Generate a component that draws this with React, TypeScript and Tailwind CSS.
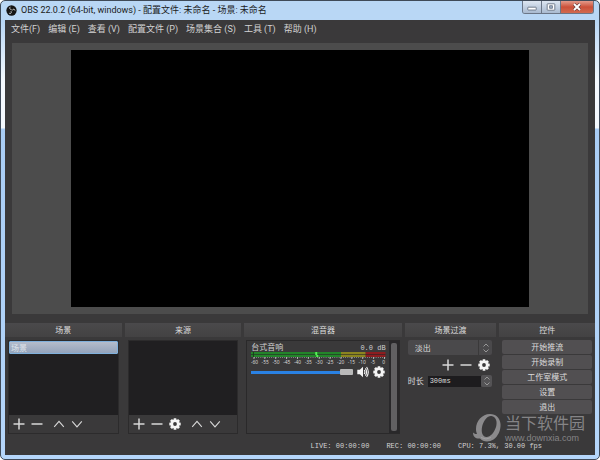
import type { ReactNode } from "react";

const menus = ["文件(F)", "编辑 (E)", "查看 (V)", "配置文件 (P)", "场景集合 (S)", "工具 (T)", "帮助 (H)"];
const actions = ["开始推流", "开始录制", "工作室模式", "设置", "退出"];
const levels = [-60, -55, -50, -45, -40, -35, -30, -25, -20, -15, -10, -5, 0];

type IconName = "plus" | "minus" | "up" | "down" | "gear";

const strokes = {
  plus: "M6 0.5V11.5M0.5 6H11.5",
  minus: "M0.5 6H11.5",
  up: "M1.2 8.8L6 3.4L10.8 8.8",
  down: "M1.2 3.4L6 8.8L10.8 3.4",
};

function Icon({ name }: { name: IconName }) {
  if (name === "gear") {
    return (
      <svg viewBox="0 0 12 12" className="size-3" aria-hidden>
        <g fill="#f4f4f4">
          {[0, 45, 90, 135].map((angle) => (
            <rect key={angle} x="4.6" y="0.3" width="2.8" height="11.4" rx="0.5" transform={`rotate(${angle} 6 6)`} />
          ))}
          <circle cx="6" cy="6" r="4.4" />
        </g>
        <circle cx="6" cy="6" r="1.9" fill="#3a393a" />
      </svg>
    );
  }
  return (
    <svg viewBox="0 0 12 12" className="size-3" fill="none" stroke="#d8d8d8" strokeWidth={name === "plus" || name === "minus" ? 1.5 : 1.1} aria-hidden>
      <path d={strokes[name]} />
    </svg>
  );
}

function IconButton({ name, label }: { name: IconName; label: string }) {
  return (
    <button type="button" aria-label={label} className="flex size-3 items-center justify-center">
      <Icon name={name} />
    </button>
  );
}

function Dock({ title, className, children }: { title: string; className: string; children: ReactNode }) {
  return (
    <section className={`flex min-w-0 flex-col ${className}`}>
      <h2 className="flex h-[14px] items-center justify-center bg-linear-to-b from-[#4a494b] to-[#434243] text-[8px] text-[#dcdcdc]">{title}</h2>
      {children}
    </section>
  );
}

function ListPanel({ items, tools, label }: { items: string[]; tools: ReactNode; label: string }) {
  return (
    <div className="mx-[3px] mt-[3px] flex flex-col border border-[#2c2b2c]">
      <ul className="h-[74px] bg-[#201f21]">
        {items.map((item) => (
          <li key={item} className="flex h-[13px] items-center rounded-[1px] border border-[#7fb0dc] bg-linear-to-b from-[#b4bccb] to-[#93a3bb] px-px text-[8px] text-[#dfe3e9]">
            {item}
          </li>
        ))}
      </ul>
      <div className="flex h-[18px] items-center gap-[6px] px-1">
        {tools}
        <div className="ml-1 flex gap-[6px]">
          <IconButton name="up" label={`上移${label}`} />
          <IconButton name="down" label={`下移${label}`} />
        </div>
      </div>
    </div>
  );
}

function WindowControls() {
  return (
    <div className="mr-px flex h-[13px] self-start overflow-hidden rounded-b-[3px] border border-t-0 border-[#6b7687]">
      <button type="button" aria-label="最小化" className="flex w-[19px] items-center justify-center border-r border-[#6b7687] bg-linear-to-b from-[#dde6f1] to-[#a9bad0]">
        <svg viewBox="0 0 10 8" className="h-2 w-[10px]" aria-hidden>
          <rect x="0.8" y="4.2" width="8.4" height="2.8" rx="0.5" fill="#fff" stroke="#596477" strokeWidth="0.8" />
        </svg>
      </button>
      <button type="button" aria-label="最大化" className="flex w-[19px] items-center justify-center border-r border-[#6b7687] bg-linear-to-b from-[#dde6f1] to-[#a9bad0]">
        <svg viewBox="0 0 10 8" className="h-2 w-[10px]" aria-hidden>
          <rect x="1.2" y="0.8" width="7.6" height="6.4" rx="0.5" fill="#fff" stroke="#596477" strokeWidth="0.8" />
          <rect x="3.7" y="2.8" width="2.6" height="2.4" fill="#a9bad0" stroke="#596477" strokeWidth="0.8" />
        </svg>
      </button>
      <button type="button" aria-label="关闭" className="flex w-[32px] items-center justify-center bg-linear-to-b from-[#e39a8b] via-[#cb5039] to-[#d16a50]">
        <svg viewBox="0 0 10 8" className="h-2 w-[10px]" aria-hidden>
          <path d="M2 1L8 7M8 1L2 7" stroke="#6a3c3c" strokeWidth="3.2" />
          <path d="M2 1L8 7M8 1L2 7" stroke="#fff" strokeWidth="1.9" />
        </svg>
      </button>
    </div>
  );
}

function VolumeMeter() {
  return (
    <svg viewBox="0 0 136 14" preserveAspectRatio="none" className="h-[14px] w-full" aria-hidden>
      <rect x="0" y="0" width="91" height="5" fill="#23852a" />
      <rect x="91" y="0" width="25" height="5" fill="#8b8420" />
      <rect x="116" y="0" width="20" height="5" fill="#8c1d20" />
      <path d="M0 2.5H136" stroke="#252525" strokeWidth="0.6" />
      <path d="M2.5 0V5" stroke="#1b3f1d" />
      <rect x="65" y="0" width="2" height="3" fill="#55f255" />
      <rect x="66" y="3" width="2" height="2" fill="#55f255" />
      <path d="M3 5.5H136" stroke="#a5a5a5" strokeWidth="1" strokeDasharray="0.7 1.5" />
      {levels.map((level, index) => (
        <g key={level}>
          <path d={`M${3 + index * 11} 5V7`} stroke="#cfcfcf" strokeWidth="0.8" />
          <text x={3.5 + index * 10.9} y="12" textAnchor="middle" fontSize="5" fill="#d8d8d8">
            {level}
          </text>
        </g>
      ))}
    </svg>
  );
}

function Mixer() {
  return (
    <div className="mx-[2px] mt-[3px] flex h-[94px] border border-[#2a292a]">
      <div className="flex min-w-0 flex-1 flex-col pl-1 pr-[3px] pt-[3px]">
        <div className="flex h-2 items-center justify-between font-['Liberation_Mono','Noto_Sans_CJK_SC',monospace] text-[8px] text-[#d0d0d0]">
          <span>台式音响</span>
          <span className="text-[7px]">0.0 dB</span>
        </div>
        <VolumeMeter />
        <div className="flex h-3 items-center gap-1">
          <input
            type="range"
            aria-label="台式音响音量"
            defaultValue={100}
            className="h-[7px] w-[102px] appearance-none bg-[linear-gradient(#2a82e4,#2a82e4)] bg-size-[100%_3px] bg-center bg-no-repeat [&::-webkit-slider-thumb]:h-[6px] [&::-webkit-slider-thumb]:w-[13px] [&::-webkit-slider-thumb]:appearance-none [&::-webkit-slider-thumb]:rounded-[1px] [&::-webkit-slider-thumb]:bg-[#b9b9b9]"
          />
          <button type="button" aria-label="静音" className="size-3">
            <svg viewBox="0 0 12 12" className="size-3" fill="none" stroke="#f4f4f4" aria-hidden>
              <path d="M0.3 3.8H2.8L6 0.8V11.2L2.8 8.2H0.3Z" fill="#f4f4f4" stroke="none" />
              <path d="M7.2 4Q8.6 6 7.2 8M8.4 2.4Q10.8 6 8.4 9.6M9.6 1Q13 6 9.6 11" strokeWidth="1.1" />
            </svg>
          </button>
          <IconButton name="gear" label="音频设置" />
        </div>
      </div>
      <div className="flex w-[10px] justify-center bg-[#29282a] py-[2px]">
        <div className="w-[6px] rounded-[2px] bg-[#616062]" />
      </div>
    </div>
  );
}

function Spinner() {
  return (
    <svg viewBox="0 0 10 12" className="h-3 w-[10px]" fill="none" stroke="#a0a0a0" strokeWidth="0.9" aria-hidden>
      <path d="M2.5 4.5L5 2L7.5 4.5M2.5 7.5L5 10L7.5 7.5" />
    </svg>
  );
}

function Transitions() {
  return (
    <div className="flex flex-col pl-[3px] pr-1 pt-[3px]">
      <div className="relative flex h-[15px] rounded-[2px] bg-[#4a494b]">
        <select aria-label="场景过渡" className="w-full appearance-none px-[7px] text-[8px] text-[#dcdcdc]">
          <option>淡出</option>
        </select>
        <span className="pointer-events-none absolute inset-y-0 right-0 flex w-[14px] items-center justify-center border-l border-[#3a393a]">
          <Spinner />
        </span>
      </div>
      <div className="flex h-5 items-center justify-end gap-[6px] pr-[2px]">
        <IconButton name="plus" label="添加过渡" />
        <IconButton name="minus" label="删除过渡" />
        <IconButton name="gear" label="过渡设置" />
      </div>
      <div className="flex h-3 items-center">
        <label htmlFor="duration" className="w-5 shrink-0 text-[8px] text-[#dcdcdc]">时长</label>
        <input id="duration" defaultValue="300ms" className="h-[11px] min-w-0 flex-1 bg-[#1d1c1e] px-[2px] font-['Liberation_Mono',monospace] text-[7px] text-[#dcdcdc]" />
        <button type="button" aria-label="调整时长" className="flex h-3 w-[11px] items-center justify-center rounded-[2px] bg-[#545355]">
          <Spinner />
        </button>
      </div>
    </div>
  );
}

function Watermark() {
  return (
    <div className="pointer-events-none absolute bottom-3 right-[10px] flex items-center gap-[3px] text-[#858486]">
      <svg viewBox="0 0 30 30" className="size-[30px]" aria-hidden>
        <path
          fillRule="evenodd"
          fill="#8b8a8c"
          d="M18 1C10 1 4 8 4 16C4 18 4.4 19.5 5 21C3.5 21.4 2 20.5 1 19.5C1 24 4 26 8 25.5C11 29 17 29.5 21.5 26.5C26 23.5 29 17 28.5 11C28 5 24 1 18 1ZM19.5 3C24 4 25.5 8.5 24 14C22 20 18 24.5 14 24C9.5 23 9 17.5 10.5 12C12.4 7 15.5 2.5 19.5 3Z"
        />
        <path d="M9 24.5Q14 27.5 19 24.5" fill="none" stroke="#a2a1a3" strokeWidth="1" />
      </svg>
      <div className="flex flex-col">
        <span className="text-[16px] leading-5">当下软件园</span>
        <span className="font-['Liberation_Sans',sans-serif] text-[9px] leading-[10px]">www.downxia.com</span>
      </div>
    </div>
  );
}

export default function App() {
  return (
    <div className="flex min-h-screen flex-col rounded-[5px] border border-[#3f4a58] bg-[linear-gradient(#b9d7f5_0,#b9d7f5_20px,#f4f9fe_80px,#f4f9fe_127px,#a9cdf5_128px,#b5d6fa_100%)] px-1 pb-1 font-['Noto_Sans','Noto_Sans_CJK_SC',sans-serif] leading-none">
      <header className="flex h-[19px] items-center justify-between">
        <h1 className="flex items-center gap-1 pl-px font-[Roboto,'Noto_Sans_CJK_SC',sans-serif] text-[9px] text-[#1b1b1b]">
          <svg viewBox="0 0 12 12" className="size-[11px]" aria-hidden>
            <circle cx="6" cy="6" r="5.6" fill="#151515" />
            <path d="M6 5C4 5 3.5 3 4.7 2M6.8 6C7.5 4 9.5 4.3 9.8 6M5.5 6.8C6.5 8.5 5 10 3.5 9" fill="none" stroke="#ddd" strokeWidth="1" />
          </svg>
          OBS 22.0.2 (64-bit, windows) - 配置文件: 未命名 - 场景: 未命名
        </h1>
        <WindowControls />
      </header>
      <main className="relative flex flex-1 flex-col bg-[#3a393a]">
        <nav className="flex h-[19px] items-center gap-2 px-[6px] font-[Roboto,'Noto_Sans_CJK_SC',sans-serif] text-[9px] text-[#d2d2d2]">
          {menus.map((menu) => (
            <button key={menu} type="button">{menu}</button>
          ))}
        </nav>
        <div className="mx-[7px] mt-1 flex min-h-[271px] flex-1 bg-[#4c4c4c] px-[59px] py-[7px]">
          <div className="flex-1 bg-black" />
        </div>
        <div className="mt-[9px] flex gap-[3px]">
          <Dock title="场景" className="flex-[117]">
            <ListPanel
              label="场景"
              items={["场景"]}
              tools={
                <>
                  <IconButton name="plus" label="添加场景" />
                  <IconButton name="minus" label="删除场景" />
                </>
              }
            />
          </Dock>
          <Dock title="来源" className="flex-[117]">
            <ListPanel
              label="来源"
              items={[]}
              tools={
                <>
                  <IconButton name="plus" label="添加来源" />
                  <IconButton name="minus" label="删除来源" />
                  <IconButton name="gear" label="来源设置" />
                </>
              }
            />
          </Dock>
          <Dock title="混音器" className="flex-[158]">
            <Mixer />
          </Dock>
          <Dock title="场景过渡" className="flex-[92]">
            <Transitions />
          </Dock>
          <Dock title="控件" className="flex-[96]">
            <div className="flex flex-col gap-px px-[3px] pt-[3px]">
              {actions.map((action) => (
                <button key={action} type="button" className="h-[14px] rounded-[2px] bg-[#514f51] text-[8px] text-[#dcdcdc]">
                  {action}
                </button>
              ))}
            </div>
          </Dock>
        </div>
        <footer className="flex h-[21px] items-center justify-end gap-[17px] pr-[53px] pt-1 font-['Liberation_Mono',monospace] text-[7px] text-[#d2d2d2]">
          <span>LIVE: 00:00:00</span>
          <span>REC: 00:00:00</span>
          <span>CPU: 7.3%, 30.00 fps</span>
        </footer>
        <Watermark />
      </main>
    </div>
  );
}
